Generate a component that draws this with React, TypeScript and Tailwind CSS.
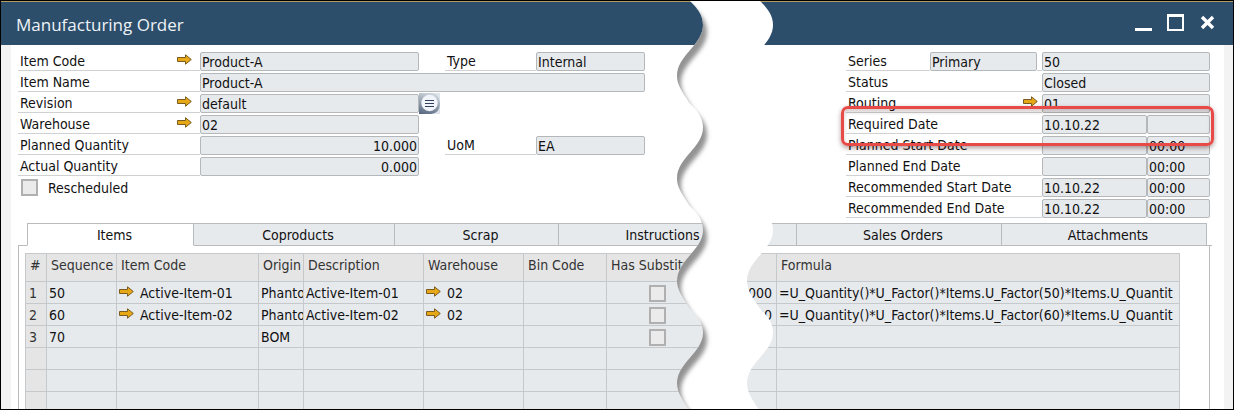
import { ReactNode } from 'react';

const FIELD =
  'h-[19px] rounded-[2px] border border-[#b4b8ba] bg-[#e7eaed] px-px text-[14px] leading-[17px] text-[#111] outline-none';
const CAPTION = 'flex h-[19px] items-center border-b border-[#cfd1d3] pt-px pl-0.5';

function Arrow() {
  return (
    <svg width="15" height="11" viewBox="0 0 15 11" aria-hidden="true">
      <path
        d="M0.5 3.5H8.5V0.8L14.3 5.5L8.5 10.2V7.5H0.5Z"
        fill="#e6a817"
        stroke="#7a5c20"
        strokeWidth="1"
      />
    </svg>
  );
}

function DrillLink({ name }: { name: string }) {
  return (
    <a href="#" aria-label={name} className="block shrink-0 pb-1">
      <Arrow />
    </a>
  );
}

function Caption({
  id,
  className,
  link,
  children,
}: {
  id: string;
  className: string;
  link?: ReactNode;
  children: ReactNode;
}) {
  return (
    <div className={`${CAPTION} ${className}`}>
      <label htmlFor={id} className="flex-1 whitespace-nowrap">
        {children}
      </label>
      {link}
    </div>
  );
}

function Field({ id, value, className, name }: { id?: string; value: string; className: string; name?: string }) {
  return <input id={id} aria-label={name} readOnly defaultValue={value} className={`${FIELD} ${className}`} />;
}

const left = 'w-[182px] pr-2';
const right = 'w-[196px] pr-1';

function DateRow({ id, label, date, time }: { id: string; label: string; date: string; time: string }) {
  return (
    <div className="flex">
      <Caption id={id} className={right}>{label}</Caption>
      <Field id={id} value={date} className="w-[105px]" />
      <Field name={`${label} time`} value={time} className="w-[63px]" />
    </div>
  );
}

function Tick({ id, name }: { id?: string; name?: string }) {
  return (
    <input
      id={id}
      aria-label={name}
      type="checkbox"
      className="block size-[17px] appearance-none border-2 border-[#b0b0b0] bg-[#ebebeb]"
    />
  );
}

const tabs = [
  { name: 'Items', width: 'w-[167px]', active: true },
  { name: 'Coproducts', width: 'w-[201px]' },
  { name: 'Scrap', width: 'w-[164px]' },
  { name: 'Instructions', width: 'w-[200px]' },
  { name: '', width: 'w-[38px]' },
  { name: 'Sales Orders', width: 'flex-1' },
  { name: 'Attachments', width: 'flex-1' },
];

const columns = [
  { name: '#', width: 'w-[21px]' },
  { name: 'Sequence', width: 'w-[70px]' },
  { name: 'Item Code', width: 'w-[142px]' },
  { name: 'Origin', width: 'w-[45px]' },
  { name: 'Description', width: 'w-[120px]' },
  { name: 'Warehouse', width: 'w-[100px]' },
  { name: 'Bin Code', width: 'w-[83px]' },
  { name: 'Has Substitutes', width: 'w-[102px]' },
  { name: '', width: 'w-[68px]' },
  { name: 'Formula', width: '' },
];

type Line = { seq: string; code?: string; origin: string; warehouse?: string; quantity?: string; formula?: string };

const lines: Line[] = [
  {
    seq: '50',
    code: 'Active-Item-01',
    origin: 'Phanto',
    warehouse: '02',
    quantity: '000',
    formula: '=U_Quantity()*U_Factor()*Items.U_Factor(50)*Items.U_Quantit',
  },
  {
    seq: '60',
    code: 'Active-Item-02',
    origin: 'Phanto',
    warehouse: '02',
    quantity: '000',
    formula: '=U_Quantity()*U_Factor()*Items.U_Factor(60)*Items.U_Quantit',
  },
  { seq: '70', origin: 'BOM' },
];

const CELL = 'h-[22px] overflow-hidden border-r border-b border-[#c6c9cb] bg-[#e7eaed] p-0 pt-px pl-0.5 whitespace-nowrap';
const NUMBER = 'h-[22px] border-r border-b border-[#c6c9cb] bg-[#e5e5e5] p-0 pt-px pl-[3px] text-[#333]';

function Linked({ text, name }: { text: string; name: string }) {
  return (
    <span className="flex items-center gap-1.5">
      <DrillLink name={name} />
      {text}
    </span>
  );
}

function Tear() {
  const wave =
    'C20 7 27 14 27 25C27 45 1 55 1 76C1 86 8 94 13 102.5' +
    'C20 109.5 27 116.5 27 127.5C27 147.5 1 157.5 1 178.5C1 188.5 8 196.5 13 205' +
    'C20 212 27 219 27 230C27 250 1 260 1 281C1 291 8 299 13 307.5' +
    'C20 314.5 27 321.5 27 332.5C27 352.5 1 362.5 1 383.5C1 393.5 8 401.5 13 410';
  const back =
    'C78 401.5 71 393.5 71 383.5C71 362.5 97 352.5 97 332.5C97 321.5 90 314.5 83 307.5' +
    'C78 299 71 291 71 281C71 260 97 250 97 230C97 219 90 212 83 205' +
    'C78 196.5 71 188.5 71 178.5C71 157.5 97 147.5 97 127.5C97 116.5 90 109.5 83 102.5' +
    'C78 94 71 86 71 76C71 55 97 45 97 25C97 14 90 7 83 0Z';
  const strip = `M13 0${wave}H83${back}`;
  return (
    <svg
      className="pointer-events-none absolute inset-y-0 left-[675px] h-full w-[98px]"
      viewBox="0 0 98 410"
      preserveAspectRatio="none"
      aria-hidden="true"
    >
      <defs>
        <clipPath id="strip">
          <path d={strip} />
        </clipPath>
        <filter id="soft" x="-20%" y="-5%" width="140%" height="110%">
          <feGaussianBlur stdDeviation="2.2" />
        </filter>
      </defs>
      <path d={strip} fill="#fff" />
      <g clipPath="url(#strip)">
        <path
          d={`M-20 0H13${wave}H-20Z`}
          transform="translate(4 7)"
          fill="#808080"
          fillOpacity="0.85"
          filter="url(#soft)"
        />
      </g>
    </svg>
  );
}

export default function App() {
  return (
    <div className="relative flex h-screen min-w-[1100px] flex-col overflow-hidden border border-black bg-white font-['DejaVu_Sans_Condensed','DejaVu_Sans',sans-serif] text-[14px] leading-[17px] text-[#111]">
      <header className="flex h-11 shrink-0 items-center justify-between border-t border-[#b39a63] bg-[#2c4e6a] pr-[17px] pl-[15px]">
        <h1 className="pt-0.5 font-['Open_Sans',sans-serif] text-[17px] leading-6 text-[#eef3f7]">Manufacturing Order</h1>
        <div className="flex gap-[15px] pb-0.5">
          <button aria-label="Minimize">
            <svg width="17" height="17" viewBox="0 0 17 17" className="block">
              <path d="M0 14H17V17H0Z" fill="#fff" />
            </svg>
          </button>
          <button aria-label="Maximize">
            <svg width="17" height="17" viewBox="0 0 17 17" className="block">
              <path d="M0 0H17V17H0ZM2 3V15H15V3Z" fill="#fff" fillRule="evenodd" />
            </svg>
          </button>
          <button aria-label="Close">
            <svg width="17" height="17" viewBox="0 0 17 17" className="block">
              <path d="M3 3L14 14M14 3L3 14" stroke="#fff" strokeWidth="3.4" />
            </svg>
          </button>
        </div>
      </header>

      <div className="flex min-h-0 flex-1">
        <div className="w-2.5 shrink-0 bg-[#f3f3f3]" />
        <main className="flex min-w-0 flex-1 flex-col overflow-hidden pt-[7px] pr-3.5 pl-[7px]">
          <form className="flex justify-between">
            <div className="flex flex-col gap-0.5">
              <div className="flex">
                <Caption id="code" className={left} link={<DrillLink name="Open item" />}>Item Code</Caption>
                <Field id="code" value="Product-A" className="w-[219px]" />
                <Caption id="type" className="ml-[26px] w-[91px]">Type</Caption>
                <Field id="type" value="Internal" className="w-[109px]" />
              </div>
              <div className="flex">
                <Caption id="name" className={left}>Item Name</Caption>
                <Field id="name" value="Product-A" className="w-[445px]" />
              </div>
              <div className="flex h-[19px] items-center">
                <Caption id="revision" className={left} link={<DrillLink name="Open revision" />}>Revision</Caption>
                <Field id="revision" value="default" className="w-[219px]" />
                <button type="button" aria-label="Choose revision">
                  <svg width="21" height="21" viewBox="0 0 21 21" className="block">
                    <defs>
                      <linearGradient id="rim" x1="0.3" y1="0" x2="0" y2="1">
                        <stop offset="0" stopColor="#c9d0d8" />
                        <stop offset="1" stopColor="#52647c" />
                      </linearGradient>
                    </defs>
                    <path d="M0 0H21V21H0Z" fill="#dfe4ea" />
                    <path d="M0 0H12Q21 1 21 10.5Q21 20 12 21H0Z" fill="url(#rim)" />
                    <circle cx="10.5" cy="10" r="8.2" fill="#f1f4fa" />
                    <path d="M6 7.5H15M6 10.5H15M6 13.5H15" stroke="#33405a" strokeWidth="1" />
                  </svg>
                </button>
              </div>
              <div className="flex">
                <Caption id="warehouse" className={left} link={<DrillLink name="Open warehouse" />}>Warehouse</Caption>
                <Field id="warehouse" value="02" className="w-[219px]" />
              </div>
              <div className="flex">
                <Caption id="planned" className={left}>Planned Quantity</Caption>
                <Field id="planned" value="10.000" className="w-[219px] text-right" />
                <Caption id="uom" className="ml-[26px] w-[91px]">UoM</Caption>
                <Field id="uom" value="EA" className="w-[109px]" />
              </div>
              <div className="flex">
                <Caption id="actual" className={left}>Actual Quantity</Caption>
                <Field id="actual" value="0.000" className="w-[219px] text-right" />
              </div>
              <div className="flex h-[19px] items-center gap-2.5 pl-[3px]">
                <Tick id="rescheduled" />
                <label htmlFor="rescheduled" className="pt-px">Rescheduled</label>
              </div>
            </div>

            <div className="flex flex-col gap-0.5">
              <div className="flex">
                <Caption id="series" className="w-[84px]">Series</Caption>
                <Field id="series" value="Primary" className="w-[107px]" />
                <div className="w-[5px] border-b border-[#cfd1d3]" />
                <Field name="Series number" value="50" className="w-[168px]" />
              </div>
              <div className="flex">
                <Caption id="status" className={right}>Status</Caption>
                <Field id="status" value="Closed" className="w-[168px]" />
              </div>
              <div className="flex">
                <Caption id="routing" className={right} link={<DrillLink name="Open routing" />}>Routing</Caption>
                <Field id="routing" value="01" className="w-[168px]" />
              </div>
              <div className="relative">
                <DateRow id="required" label="Required Date" date="10.10.22" time="" />
                <div className="pointer-events-none absolute -top-[9px] -right-1 -bottom-3 -left-[5px] z-10 rounded-[7px] border-3 border-[#e84a48] shadow-[0_2px_5px_rgba(60,0,0,0.4),inset_0_3px_4px_rgba(60,0,0,0.2)]" />
              </div>
              <DateRow id="start" label="Planned Start Date" date="" time="00:00" />
              <DateRow id="end" label="Planned End Date" date="" time="00:00" />
              <DateRow id="rec-start" label="Recommended Start Date" date="10.10.22" time="00:00" />
              <DateRow id="rec-end" label="Recommended End Date" date="10.10.22" time="00:00" />
            </div>
          </form>

          <div role="tablist" className="mt-[5px] -mr-0.5 flex h-[23px] shrink-0">
            <div className="w-[9px] border-b border-[#b9bcbe]" />
            {tabs.map((tab) => (
              <button
                key={tab.name}
                role="tab"
                aria-selected={!!tab.active}
                className={`${tab.width} border-t border-r border-b border-[#b9bcbe] pt-px pl-2 ${tab.active ? 'border-l border-b-white bg-white' : 'bg-[#e7eaed]'}`}
              >
                {tab.name}
              </button>
            ))}
            <div className="w-[5px] border-b border-[#b9bcbe]" />
          </div>

          <section className="min-h-0 flex-1 overflow-hidden border-x border-[#b9bcbe] pt-[7px] pr-[29px] pl-1.5">
            <table className="w-full table-fixed border-separate border-spacing-0 border-t border-l border-[#c6c9cb]">
              <thead>
                <tr>
                  {columns.map((column) => (
                    <th
                      key={column.name}
                      className={`${column.width} h-7 overflow-hidden border-r border-b border-[#c6c9cb] bg-[#e5e5e5] p-0 pb-1 pl-1 text-left font-normal whitespace-nowrap text-[#333]`}
                    >
                      {column.name}
                    </th>
                  ))}
                </tr>
              </thead>
              <tbody>
                {lines.map((line, i) => (
                  <tr key={line.seq}>
                    <td className={NUMBER}>{i + 1}</td>
                    <td className={CELL}>{line.seq}</td>
                    <td className={CELL}>{line.code && <Linked text={line.code} name="Open item" />}</td>
                    <td className={CELL}>{line.origin}</td>
                    <td className={CELL}>{line.code}</td>
                    <td className={CELL}>{line.warehouse && <Linked text={line.warehouse} name="Open warehouse" />}</td>
                    <td className={CELL} />
                    <td className={`${CELL} pr-0.5`}>
                      <span className="flex justify-center">
                        <Tick name={`Line ${i + 1} has substitutes`} />
                      </span>
                    </td>
                    <td className={`${CELL} pr-1 text-right`}>{line.quantity}</td>
                    <td className={CELL}>{line.formula}</td>
                  </tr>
                ))}
                {[4, 5, 6].map((row) => (
                  <tr key={row}>
                    <td className={NUMBER} />
                    {columns.slice(1).map((column) => (
                      <td key={column.name} className={CELL} />
                    ))}
                  </tr>
                ))}
              </tbody>
            </table>
          </section>
        </main>
        <div className="w-[9px] shrink-0 bg-[#f3f3f3]" />
      </div>
      <div className="absolute -inset-y-px left-0 w-0">
        <Tear />
      </div>
    </div>
  );
}
